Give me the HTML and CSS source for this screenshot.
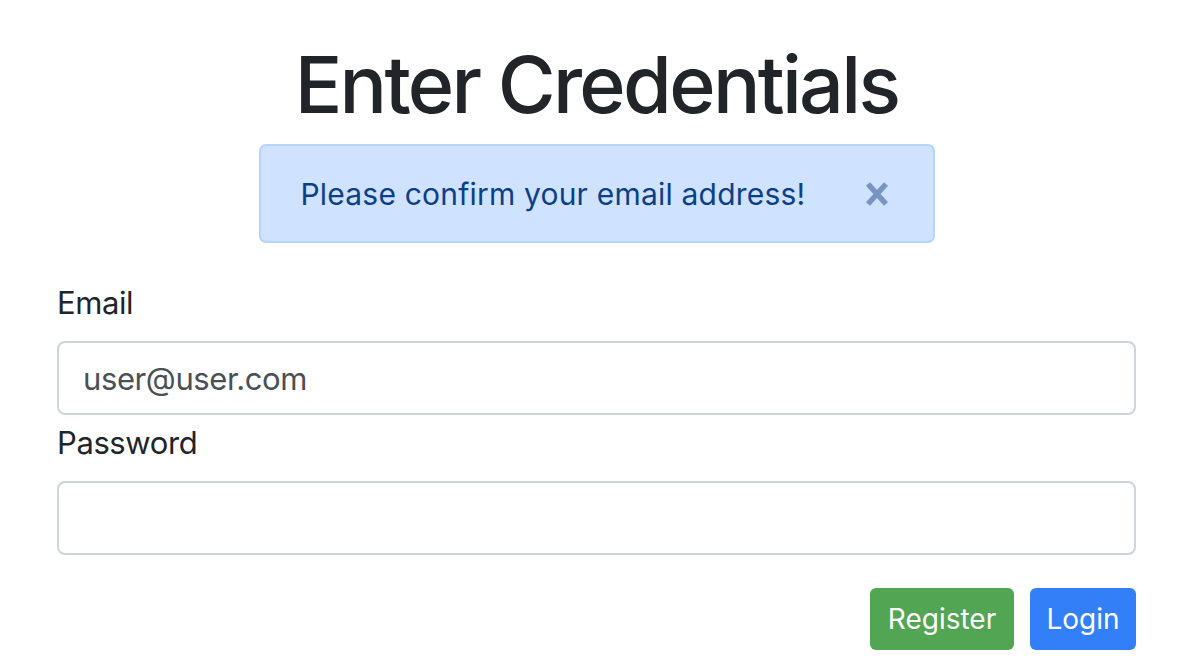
FILE: index.html
```html
<!DOCTYPE html>
<html lang="en">
<head>
<meta charset="utf-8">
<title>Enter Credentials</title>
<link rel="stylesheet" href="styles.css">
</head>
<body>
<main class="page">
  <h1 class="title">Enter Credentials</h1>
  <div class="alert" role="alert">
    <span class="alert-text">Please confirm your email address!</span>
    <button class="alert-close" type="button" aria-label="Close">
      <svg viewBox="0 0 24 26" width="24" height="26" aria-hidden="true">
        <path d="M3 3 L21 23 M21 3 L3 23" stroke="currentColor" stroke-width="5.5" stroke-linecap="butt"/>
      </svg>
    </button>
  </div>
  <form class="form">
    <label class="label" for="email">Email</label>
    <input class="input" id="email" type="email" value="user@user.com">
    <label class="label" for="password">Password</label>
    <input class="input" id="password" type="password">
    <div class="actions">
      <button class="btn btn-green" type="button">Register</button>
      <button class="btn btn-blue" type="button">Login</button>
    </div>
  </form>
</main>
</body>
</html>
```

FILE: styles.css
```css
* { box-sizing: border-box; }
html, body { margin: 0; padding: 0; background: #fff; }
body {
  font-family: Inter, "Noto Sans", "Liberation Sans", sans-serif;
  color: #212529;
}
.page {
  width: 1079px;
  margin-left: 57px;
  display: flex;
  flex-direction: column;
  align-items: center;
  padding-top: 36px;
}
.title {
  margin: 0;
  font-size: 79px;
  font-weight: 500;
  line-height: 96px;
  letter-spacing: -2.7px;
  color: #212529;
}
.alert {
  margin-top: 12px;
  width: 676px;
  height: 99px;
  background: #cfe2ff;
  border: 2px solid #b6d4fe;
  border-radius: 7px;
  color: #0d3f87;
  display: flex;
  align-items: center;
  justify-content: space-between;
  padding: 0 44px 0 40px;
}
.alert-text {
  font-size: 30px;
  letter-spacing: 0.2px;
}
.alert-close {
  border: 0;
  background: transparent;
  padding: 0;
  color: #7895c2;
  display: flex;
  cursor: pointer;
}
.form {
  width: 100%;
  display: flex;
  flex-direction: column;
  margin-top: 40px;
}
.label {
  font-size: 31px;
  line-height: 40px;
  letter-spacing: -0.4px;
  color: #212529;
}
.input {
  margin-top: 18px;
  width: 100%;
  height: 74px;
  border: 2px solid #ced4da;
  border-radius: 8px;
  padding: 0 24px;
  font-family: inherit;
  font-size: 31px;
  letter-spacing: -0.4px;
  color: #495057;
  background: #fff;
  outline: none;
}
.input + .label { margin-top: 8px; }
.actions {
  display: flex;
  justify-content: flex-end;
  gap: 16px;
  margin-top: 33px;
}
.btn {
  height: 62px;
  border: 0;
  border-radius: 6px;
  color: #fff;
  font-family: inherit;
  font-size: 28px;
  padding: 0;
  cursor: pointer;
}
.btn-green { background: #52a552; width: 144px; }
.btn-blue { background: #337ff7; width: 106px; }
```
